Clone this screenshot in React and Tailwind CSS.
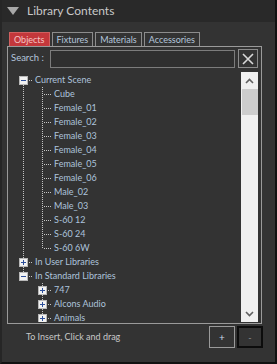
import React from 'react'

const font = { fontFamily: 'Lato, "Liberation Sans", sans-serif' }

const rows = [
    { label: 'Current Scene', pipes: [], top: false, next: true, box: 'minus' },
    { label: 'Cube', pipes: [true], top: true, next: true },
    { label: 'Female_01', pipes: [true], top: true, next: true },
    { label: 'Female_02', pipes: [true], top: true, next: true },
    { label: 'Female_03', pipes: [true], top: true, next: true },
    { label: 'Female_04', pipes: [true], top: true, next: true },
    { label: 'Female_05', pipes: [true], top: true, next: true },
    { label: 'Female_06', pipes: [true], top: true, next: true },
    { label: 'Male_02', pipes: [true], top: true, next: true },
    { label: 'Male_03', pipes: [true], top: true, next: true },
    { label: 'S-60 12', pipes: [true], top: true, next: true },
    { label: 'S-60 24', pipes: [true], top: true, next: true },
    { label: 'S-60 6W', pipes: [true], top: true, next: false },
    { label: 'In User Libraries', pipes: [], top: true, next: true, box: 'plus' },
    { label: 'In Standard Libraries', pipes: [], top: true, next: false, box: 'minus' },
    { label: '747', pipes: [false], top: true, next: true, box: 'plus' },
    { label: 'Alcons Audio', pipes: [false], top: true, next: true, box: 'plus' },
    { label: 'Animals', pipes: [false], top: true, next: true, box: 'plus' },
]

const dot = '#c4c4c4'

const Pipe = ({ on }) => (
    <svg width="19" height="14" className="shrink-0">
        {on && <line x1="9.5" y1="0" x2="9.5" y2="14" stroke={dot} strokeDasharray="1 1" />}
    </svg>
)

const Node = ({ top, next, box }) => (
    <svg width="19" height="14" className="shrink-0">
        {top && <line x1="9.5" y1="0" x2="9.5" y2="7" stroke={dot} strokeDasharray="1 1" />}
        {next && <line x1="9.5" y1="8" x2="9.5" y2="14" stroke={dot} strokeDasharray="1 1" />}
        <line x1={box ? 15 : 11} y1="7.5" x2="19" y2="7.5" stroke={dot} strokeDasharray="1 1" />
        {box && (
            <g>
                <rect x="5.5" y="3.5" width="8" height="8" fill="#f2f2f2" stroke="#b8b8b8" />
                <line x1="7" y1="7.5" x2="12" y2="7.5" stroke="#2c4f9a" />
                {box === 'plus' && <line x1="9.5" y1="5" x2="9.5" y2="10" stroke="#2c4f9a" />}
            </g>
        )}
    </svg>
)

const Tab = ({ label, active }) => (
    <div
        className={`h-[14px] px-[4px] flex items-center border border-b-0 text-[9px] leading-none ${active
            ? 'bg-[#c4373b] border-[#d06060] text-[#f4c4c4]'
            : 'border-[#8c8c8c] text-[#b4c6dc]'}`}>
        {label}
    </div>
)

export default function App() {
    return (
        <div style={font}
            className="w-[277px] h-[364px] bg-[#333333] border-l-2 border-[#262626] border-r-2 border-r-[#111111] border-b-2 border-b-[#111111] flex flex-col overflow-hidden">
            <div className="h-[22px] bg-[#292929] flex items-center shrink-0">
                <svg width="12" height="9" className="ml-[5px]">
                    <polygon points="0,0 12,0 6,8" fill="#a8a8a8" />
                </svg>
                <span className="ml-[8px] text-[12px] text-[#c8c8c8] leading-none">Library Contents</span>
            </div>

            <div className="pl-[5px] pt-[10px] flex flex-col">
                <div className="flex gap-[2px] pl-[2px]">
                    <Tab label="Objects" active />
                    <Tab label="Fixtures" />
                    <Tab label="Materials" />
                    <Tab label="Accessories" />
                </div>

                <div className="w-[255px] h-[278px] border border-[#9a9a9a] flex flex-col">
                    <div className="flex items-center mt-[2px] h-[19px] pr-[3px]">
                        <span className="ml-[3px] text-[9.5px] text-[#b4c6dc] w-[39px]">Search :</span>
                        <div className="w-[185px] h-[18px] border border-[#7c7c7c] bg-[#2f2f2f]" />
                        <div className="ml-[3px] w-[20px] h-[19px] border border-[#8c8c8c] flex items-center justify-center">
                            <svg width="12" height="12">
                                <path d="M1 1 L11 11 M11 1 L1 11" stroke="#d8d8d8" strokeWidth="1.6" />
                            </svg>
                        </div>
                    </div>

                    <div className="flex mt-[4px] h-[250px] pr-[3px]">
                        <div className="flex-1 overflow-hidden pt-[1px] pl-[6px]">
                            {rows.map((r) => (
                                <div key={r.label} className="flex items-center h-[14px]">
                                    {r.pipes.map((p, i) => <Pipe key={i} on={p} />)}
                                    <Node top={r.top} next={r.next} box={r.box} />
                                    <span className="ml-[2px] text-[9px] leading-[14px] text-[#adc3dc] whitespace-nowrap">
                                        {r.label}
                                    </span>
                                </div>
                            ))}
                        </div>
                        <div className="w-[17px] bg-[#f0f0f0] flex flex-col items-end">
                            <div className="h-[17px] w-full flex items-center justify-center">
                                <svg width="9" height="6">
                                    <path d="M1 5 L4.5 1.5 L8 5" stroke="#606060" strokeWidth="1.6" fill="none" />
                                </svg>
                            </div>
                            <div className="w-[16px] h-[26px] bg-[#cdcdcd]" />
                            <div className="flex-1" />
                            <div className="h-[17px] w-full flex items-center justify-center">
                                <svg width="9" height="6">
                                    <path d="M1 1 L4.5 4.5 L8 1" stroke="#606060" strokeWidth="1.6" fill="none" />
                                </svg>
                            </div>
                        </div>
                    </div>
                </div>

                <div className="flex items-center mt-[2px] w-[256px]">
                    <span className="ml-[19px] text-[9px] text-[#c8c8c8] flex-1">To Insert, Click and drag</span>
                    <div className="w-[26px] h-[22px] border border-[#9a9a9a] flex items-center justify-center text-[10px] text-[#c8d8e8] leading-none">+</div>
                    <div className="ml-[2px] w-[26px] h-[22px] border-2 border-[#0c0c0c] flex items-center justify-center text-[9px] text-[#8c8c8c] leading-none">-</div>
                </div>
            </div>
        </div>
    )
}
